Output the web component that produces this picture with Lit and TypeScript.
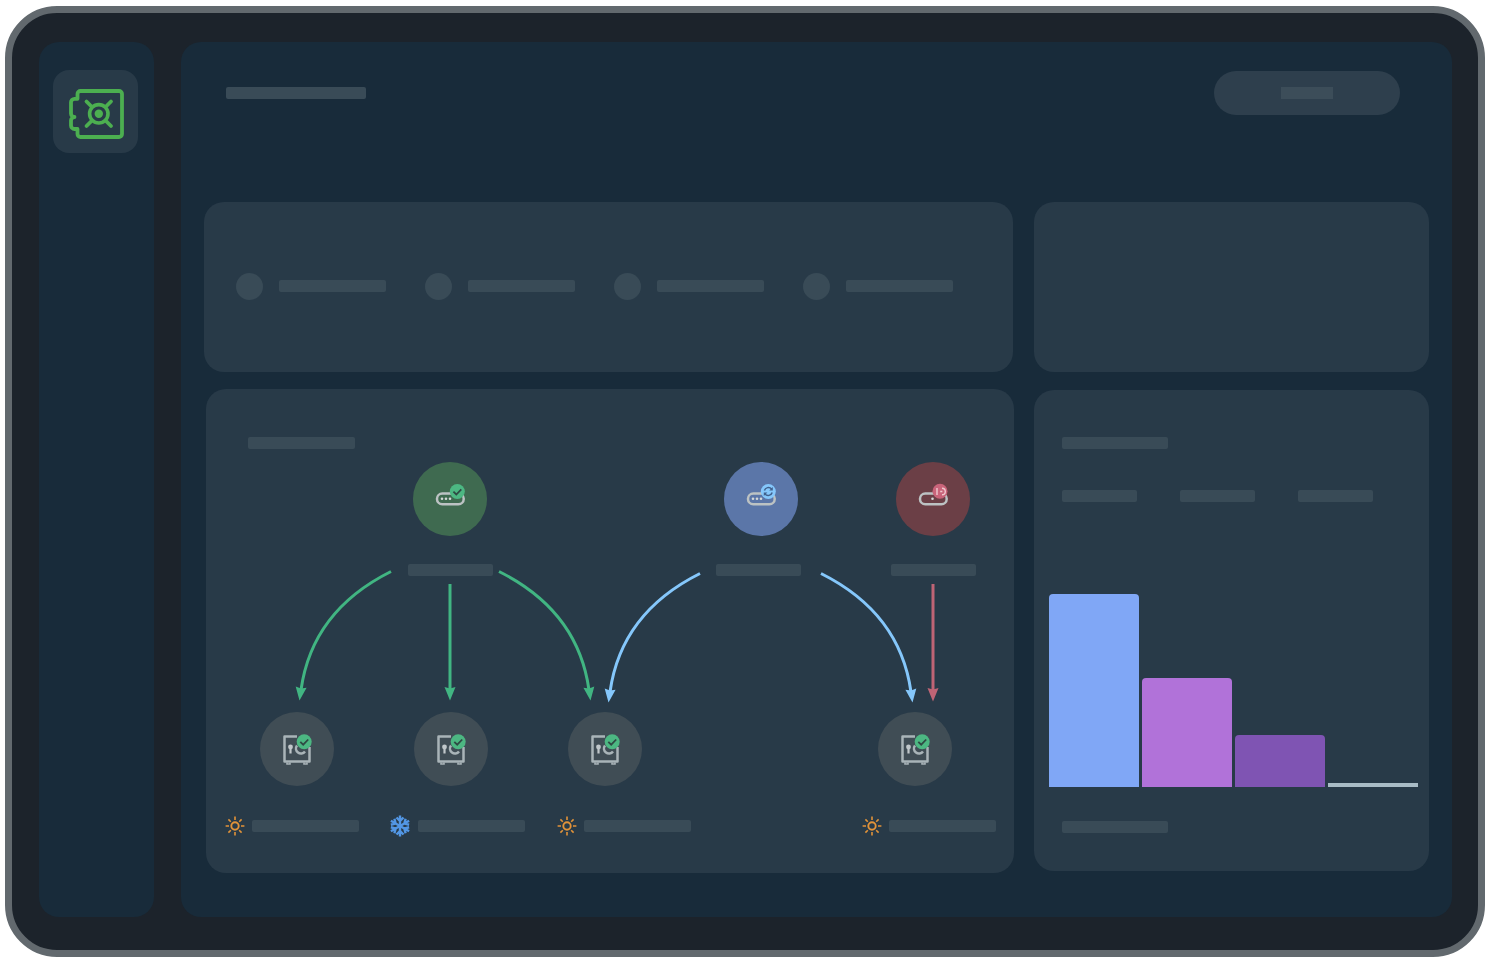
import { LitElement, html, css, svg } from "lit";
import { customElement } from "lit/decorators.js";

// Coordinates of the diagram canvas are relative to the card's top-left (206, 389).
const OX = 206;
const OY = 389;

const kinds: Record<string, string> = { green: "n-green", blue: "n-blue", red: "n-red", grey: "n-grey" };

const edges = [
  { d: "M391 571.5Q312 611 301 690", c: "#41b582", tip: [299.5, 700.5], a: 187 },
  { d: "M450 584V690", c: "#41b582", tip: [450, 700.5], a: 180 },
  { d: "M499 571.5Q578 611 589 690", c: "#41b582", tip: [590.5, 700.5], a: 173 },
  { d: "M700 573.5Q621 613 610 692", c: "#85c7fb", tip: [608.5, 702.5], a: 187 },
  { d: "M821 573.5Q900 613 911 692", c: "#85c7fb", tip: [912.5, 702.5], a: 173 },
  { d: "M933 584V691", c: "#bf6475", tip: [933, 701.5], a: 180 },
];

const topNodes = [
  { x: 450, kind: "green", badge: "check", lx: 408, dots: 3 },
  { x: 760.5, kind: "blue", badge: "sync", lx: 716, dots: 3 },
  { x: 933, kind: "red", badge: "err", lx: 891, dots: 1 },
];

const bottomNodes = [
  { x: 296.5, wx: 235, weather: "sun", lx: 252 },
  { x: 450.5, wx: 400, weather: "snow", lx: 418 },
  { x: 605, wx: 567, weather: "sun", lx: 584 },
  { x: 915, wx: 872, weather: "sun", lx: 889 },
];

const bars = [
  { h: 193, c: "#80a7f6" },
  { h: 109, c: "#b172d9" },
  { h: 52, c: "#7f54b3" },
  { h: 4, c: "#a9bcc6" },
];

function pillIcon(badge: string, dots: number) {
  return html`<svg class="ico" width="48" height="36" viewBox="0 0 48 36">
    <rect x="11" y="12.5" width="26.7" height="10.7" rx="5.3" fill="none" stroke="#bcc2c3" stroke-width="2.5"></rect>
    ${dots === 3
      ? svg`<circle cx="16" cy="17.8" r="1.3" fill="#d4d8d8"></circle><circle cx="20" cy="17.8" r="1.3" fill="#d4d8d8"></circle><circle cx="24" cy="17.8" r="1.3" fill="#d4d8d8"></circle>`
      : svg`<circle cx="23.5" cy="17.8" r="1.3" fill="#d4d8d8"></circle>`}
    ${badge === "check"
      ? svg`<circle cx="31.3" cy="10.5" r="7.5" fill="#4cb782"></circle><path d="M27.4 10.6l2.900 2.900 5-5.200" fill="none" stroke="#2f4a44" stroke-width="1.8"></path>`
      : badge === "sync"
      ? svg`<circle cx="31.3" cy="10.5" r="7.5" fill="#85c7fb"></circle><path d="M27.4 9.500a4.200 4.200 0 0 1 7.200-1.500M35.200 11.500a4.200 4.200 0 0 1-7.200 1.500" fill="none" stroke="#41608c" stroke-width="1.5"></path><path d="M35.800 6v3.600h-3.600zM26.800 15v-3.600h3.600z" fill="#41608c"></path>`
      : svg`<circle cx="31" cy="10.3" r="7.5" fill="#c9647a"></circle><path d="M28 7v7M33 7.200a3.300 3.300 0 0 1 0 6.600M31.200 10.500h2.200" fill="none" stroke="#f0c9cf" stroke-width="1.4"></path>`}
  </svg>`;
}

function safeIcon() {
  return html`<svg class="ico" width="48" height="48" viewBox="0 0 48 48">
    <path d="M24 11.5H11.5V36.500H36.500V22" fill="none" stroke="#a9b4b8" stroke-width="2.5" stroke-linejoin="round"></path>
    <path d="M14 37.500v1.500h3v-1.500M31 37.500v1.500h3v-1.500" fill="none" stroke="#a9b4b8" stroke-width="1.6"></path>
    <circle cx="17.5" cy="22" r="2.4" fill="#c0c7ca"></circle>
    <rect x="16.4" y="22.5" width="2.2" height="6" fill="#c0c7ca"></rect>
    <path d="M24 20.500a5 5 0 1 0 8 6" fill="none" stroke="#a9b4b8" stroke-width="2.5"></path>
    <circle cx="31.2" cy="16.7" r="7.5" fill="#4cb782"></circle>
    <path d="M27.300 16.800l2.900 2.900 5-5.200" fill="none" stroke="#2f4a44" stroke-width="1.8"></path>
  </svg>`;
}

function sunIcon() {
  return html`<svg class="wi" width="20" height="20" viewBox="0 0 20 20">
    <circle cx="10" cy="10" r="3.7" fill="none" stroke="#e29339" stroke-width="1.9"></circle>
    <path d="M10 .6v3.400M10 16v3.400M.6 10h3.400M16 10h3.400M3.400 3.400l2.400 2.400M14.200 14.200l2.400 2.400M3.400 16.600l2.400-2.400M14.200 5.800l2.400-2.400" stroke="#e29339" stroke-width="1.6" fill="none"></path>
  </svg>`;
}

function snowIcon() {
  return html`<svg class="wi" width="24" height="24" viewBox="0 0 24 24">
    <g fill="none" stroke="#5296e4" stroke-width="2.4">
      <path d="M12 1.500v21M8.500 3.500L12 7l3.500-3.500M8.500 20.500L12 17l3.500 3.500"></path>
      <path transform="rotate(60 12 12)" d="M12 1.500v21M8.500 3.500L12 7l3.500-3.500M8.500 20.500L12 17l3.500 3.500"></path>
      <path transform="rotate(120 12 12)" d="M12 1.500v21M8.500 3.500L12 7l3.500-3.500M8.500 20.500L12 17l3.500 3.500"></path>
    </g>
  </svg>`;
}

@customElement("app-root")
export class AppRoot extends LitElement {
  static styles = css`
    :host { display: block; height: 960px; overflow: hidden; background: #fff; }
    * { box-sizing: border-box; }
    .device {
      margin: 5.5px 0 0 4.5px;
      width: 1480px; height: 951.5px;
      border: 7px solid #62696e; border-radius: 52px;
      background: #1c232b;
      padding: 29.5px 0 0 27.5px;
      display: flex; gap: 27px; align-items: flex-start;
    }
    .side {
      width: 115px; height: 875px; border-radius: 20px; background: #182b3a;
      padding: 28px 0 0 14px;
    }
    .tile {
      width: 85px; height: 83px; border-radius: 16px; background: #283a48;
      display: flex; align-items: center; justify-content: center;
    }
    .main {
      width: 1271px; height: 875px; border-radius: 20px; background: #182b3a;
      padding: 0 23px;
      display: flex; flex-direction: column;
    }
    .head {
      height: 160px; display: flex; align-items: flex-start; justify-content: space-between;
      padding: 29px 29px 0 22px;
    }
    .title { width: 140px; margin-top: 16px; }
    .btn {
      width: 186px; height: 44px; border-radius: 22px; background: #2e3f4d;
      display: flex; align-items: center; justify-content: center;
    }
    .btn .bar { width: 52px; border-radius: 0; background: #3c4d59; }
    .bar { height: 12px; border-radius: 2px; background: #394b57; flex: none; display: block; }
    .row { display: flex; gap: 20px; align-items: flex-start; }
    .card { background: #283a48; border-radius: 20px; flex: none; }
    .c1 { width: 809px; height: 170px; display: flex; align-items: center; padding: 0 0 2px 32px; gap: 39.5px; }
    .c2 { width: 395px; height: 170px; margin-left: 1px; }
    .stat { display: flex; align-items: center; gap: 15.5px; }
    .dot { width: 27px; height: 27px; border-radius: 50%; background: #394b57; }
    .stat .bar { width: 107px; }
    .lower { margin-top: 17px; }
    .c3 { width: 808px; height: 484px; margin-left: 2px; position: relative; padding: 48px 0 0 42px; }
    .c3 > .bar { width: 107px; }
    .c4 { width: 395px; height: 481px; margin-top: 1px; padding: 47px 0 0 28px; }
    .c4 .t { width: 106px; }
    .legend { display: flex; gap: 43px; margin-top: 41px; }
    .legend .bar { width: 75px; }
    .chart {
      display: flex; align-items: flex-end; gap: 2.5px;
      height: 193px; width: 369px; margin: 92px 0 0 -13px;
    }
    .col { flex: 1; border-radius: 4px 4px 0 0; }
    .col.thin { border-radius: 0; }
    .foot { margin-top: 34px; width: 106px; }
    .edges { position: absolute; left: 0; top: 0; pointer-events: none; }
    .node {
      position: absolute; width: 74px; height: 74px; border-radius: 50%;
      display: flex; align-items: center; justify-content: center;
    }
    .n-green { background: #3f6a50; }
    .n-blue { background: #5b76a8; }
    .n-red { background: #6b3f46; }
    .n-grey { background: #404d55; }
    .lab { position: absolute; }
    .lab.t { width: 85px; }
    .lab.b { width: 107px; }
    .wi { position: absolute; }
    .ico { display: block; }
  `;

  render() {
    return html`
      <div class="device">
        <div class="side">
          <div class="tile">
            <svg width="60" height="56" viewBox="0 0 60 56" fill="none" stroke="#4caf50" stroke-width="3.8" stroke-linecap="round" stroke-linejoin="round">
              <path d="M11.5 14.800V10a3 3 0 0 1 3-3H53a3 3 0 0 1 3 3V50a3 3 0 0 1-3 3H14.500a3 3 0 0 1-3-3V45H8.500a3.500 3.500 0 0 1-3.500-3.500V36.500a3.500 3.500 0 0 1 3.500-3.500a3.500 3.500 0 0 1-3.500-3.500V18.300a3.500 3.500 0 0 1 3.500-3.500z"></path>
              <circle cx="32.800" cy="29.800" r="9.200" stroke-width="3.600"></circle>
              <circle cx="32.800" cy="29.800" r="4.200" fill="#4caf50" stroke="none"></circle>
              <path d="M20.500 17.500l4.500 4.500M45 17.500l-4.500 4.500M20.500 42l4.500-4.500M45 42l-4.500-4.500"></path>
            </svg>
          </div>
        </div>
        <div class="main">
          <div class="head">
            <span class="bar title"></span>
            <div class="btn"><span class="bar"></span></div>
          </div>
          <div class="row">
            <div class="card c1">
              ${[0, 1, 2, 3].map(() => html`<div class="stat"><span class="dot"></span><span class="bar"></span></div>`)}
            </div>
            <div class="card c2"></div>
          </div>
          <div class="row lower">
            <div class="card c3">
              <span class="bar"></span>
              <svg class="edges" width="808" height="484" viewBox="${OX} ${OY} 808 484" fill="none">
                ${edges.map(
                  (e) => svg`<path d=${e.d} stroke=${e.c} stroke-width="3"></path>
                    <path d="M0 0L-5.500 -13.500L0 -12L5.500 -13.500Z" fill=${e.c} transform="translate(${e.tip[0]} ${e.tip[1]}) rotate(${e.a - 180})"></path>`
                )}
              </svg>
              ${topNodes.map(
                (n) => html`
                  <div class="node ${kinds[n.kind]}" style="left:${n.x - 37 - OX}px;top:${462 - OY}px">${pillIcon(n.badge, n.dots)}</div>
                  <span class="bar lab t" style="left:${n.lx - OX}px;top:${564 - OY}px"></span>`
              )}
              ${bottomNodes.map(
                (n) => html`
                  <div class="node n-grey" style="left:${n.x - 37 - OX}px;top:${712 - OY}px">${safeIcon()}</div>
                  <span class="wi" style="left:${n.wx - (n.weather === "sun" ? 10 : 12) - OX}px;top:${826 - (n.weather === "sun" ? 10 : 12) - OY}px">
                    ${n.weather === "sun" ? sunIcon() : snowIcon()}
                  </span>
                  <span class="bar lab b" style="left:${n.lx - OX}px;top:${820 - OY}px"></span>`
              )}
            </div>
            <div class="card c4">
              <span class="bar t"></span>
              <div class="legend"><span class="bar"></span><span class="bar"></span><span class="bar"></span></div>
              <div class="chart">
                ${bars.map((b) => html`<div class="col ${b.h < 10 ? "thin" : ""}" style="height:${b.h}px;background:${b.c}"></div>`)}
              </div>
              <span class="bar foot"></span>
            </div>
          </div>
        </div>
      </div>
    `;
  }
}
